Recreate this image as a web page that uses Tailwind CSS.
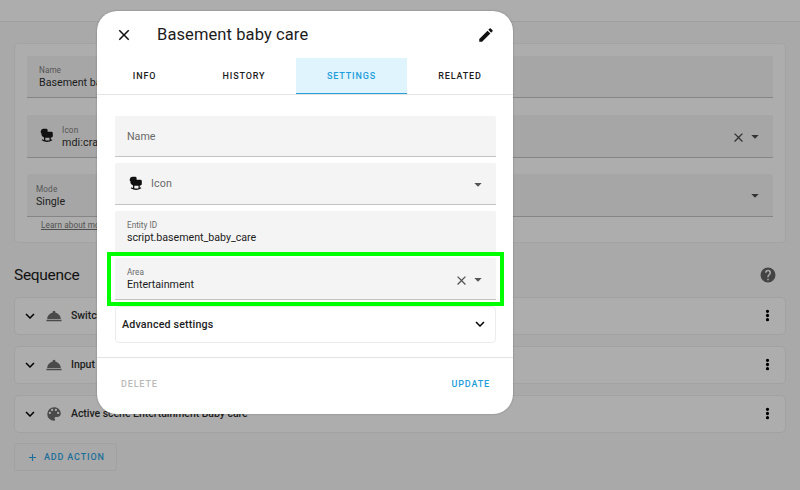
<!DOCTYPE html>
<html lang="en">
<head>
<meta charset="utf-8">
<title>Basement baby care</title>
<script src="https://cdn.jsdelivr.net/npm/@tailwindcss/browser@4"></script>
</head>
<body class="font-['Roboto',sans-serif] bg-[#a9a9a9] text-[#1c1c1c] w-[800px] h-[490px] overflow-hidden relative">
<svg class="hidden">
  <symbol id="close" viewBox="0 0 24 24"><path d="M19,6.41L17.59,5L12,10.59L6.41,5L5,6.41L10.59,12L5,17.59L6.41,19L12,13.41L17.59,19L19,17.59L13.41,12L19,6.41Z"/></symbol>
  <symbol id="chev" viewBox="0 0 24 24"><path d="M7.41,8.58L12,13.17L16.59,8.58L18,10L12,16L6,10L7.41,8.58Z"/></symbol>
  <symbol id="tri" viewBox="0 0 8 4"><path d="M0.3 0H7.7L4 3.8Z"/></symbol>
  <symbol id="bell" viewBox="0 0 24 24"><path d="M12,5A2,2 0 0,1 14,7C14,7.24 13.96,7.47 13.88,7.69C17.95,8.5 21,11.91 21,16H3C3,11.91 6.05,8.5 10.12,7.69C10.04,7.47 10,7.24 10,7A2,2 0 0,1 12,5M22,19H2V17H22V19Z"/></symbol>
  <symbol id="dots" viewBox="0 0 24 24"><path d="M12,15.6A2.3,2.3 0 0,1 12,20.2A2.3,2.3 0 0,1 12,15.6M12,9.7A2.3,2.3 0 0,1 12,14.3A2.3,2.3 0 0,1 12,9.7M12,3.8A2.3,2.3 0 0,1 12,8.4A2.3,2.3 0 0,1 12,3.8Z"/></symbol>
  <symbol id="cradle" viewBox="0 0 14 15"><path d="M3.2 0.8H6.2Q7.6 0.8 7.6 2.2V3.8H11.4Q12.8 3.8 12.8 5.2V8Q12.8 9.4 11.4 9.4H10.8V11.7L11.7 11.2L12.4 12.3Q7 15.6 1.7 12.3L2.4 11.2L4 11.9V9.4Q1.4 8.8 1.4 6.2V5.2Q0.5 4.8 0.7 3.4Q1 0.8 3.2 0.8ZM5.3 9.8V12.3Q7.4 12.7 9.5 12.3V9.8Z" fill-rule="evenodd"/></symbol>
</svg>

<!-- Page behind the scrim -->
<header class="h-[22px] bg-[#adadad] border-b border-[#9f9f9f]"></header>
<main class="pl-[14px] pr-[14px] pt-[21px]">
  <section class="h-[200px] rounded-[5px] border border-[#a3a3a3] bg-[#adadad] px-3 pt-3">
    <div class="h-[42px] rounded-t-[2px] bg-[#a6a6a6] border-b border-[#858585] pl-3 pt-2">
      <div class="text-[8.2px] leading-[12px] text-[#555] tracking-[.05px]">Name</div>
      <div class="text-[10.7px] leading-[13px] tracking-[0px]">Basement baby care</div>
    </div>
    <div class="mt-[17px] h-[43px] rounded-t-[2px] bg-[#a6a6a6] border-b border-[#858585] pl-[13px] pr-[14px] flex items-center">
      <svg class="w-[14px] h-[15px] -mt-[1px] fill-[#111]"><use href="#cradle"/></svg>
      <div class="ml-[8px] flex-1">
        <div class="text-[8.2px] leading-[12px] text-[#555] tracking-[.15px]">Icon</div>
        <div class="text-[10.7px] leading-[13px] tracking-[.1px]">mdi:cradle</div>
      </div>
      <svg class="w-[15px] h-[15px] mr-[5px] mt-[2px] fill-[#333]"><use href="#close"/></svg>
      <svg class="w-[8px] h-[4px] mt-[1px] fill-[#333]"><use href="#tri"/></svg>
    </div>
    <div class="mt-[16px] h-[43px] rounded-t-[2px] bg-[#a6a6a6] border-b border-[#858585] pl-[9px] pr-[14px] flex items-center">
      <div class="flex-1">
        <div class="text-[8.2px] leading-[12px] text-[#555] tracking-[.15px]">Mode</div>
        <div class="text-[10.7px] leading-[13px] tracking-[0px]">Single</div>
      </div>
      <svg class="w-[8px] h-[4px] mt-[1px] fill-[#333]"><use href="#tri"/></svg>
    </div>
    <div class="pl-[14px] pt-[2px] text-[8.2px] leading-[12px] tracking-[.1px] text-[#505050] underline">Learn about modes</div>
  </section>
  <div class="h-[54px] pt-[9px] pr-[9px] flex items-center justify-between">
    <h2 class="text-[15.5px] leading-5 tracking-[-.3px] text-[#111]">Sequence</h2>
    <svg class="w-[18px] h-[18px] fill-[#444]" viewBox="0 0 24 24"><path d="M15.07,11.25L14.17,12.17C13.45,12.89 13,13.5 13,15H11V14.5C11,13.39 11.45,12.39 12.17,11.67L13.41,10.41C13.78,10.05 14,9.55 14,9C14,7.89 13.1,7 12,7A2,2 0 0,0 10,9H8A4,4 0 0,1 12,5A4,4 0 0,1 16,9C16,9.88 15.64,10.67 15.07,11.25M13,19H11V17H13M12,2A10,10 0 1,0 22,12 10,10 0 0,0 12,2Z"/></svg>
  </div>
  <div class="flex flex-col gap-[11px]">
    <div class="h-[38px] rounded-[5px] border border-[#a2a2a2] bg-[#adadad] flex items-center pl-[6px] pr-[9px]">
      <svg class="w-[18px] h-[18px] fill-black"><use href="#chev"/></svg>
      <svg class="w-[18px] h-[18px] ml-[6px] fill-[#4a4a4a]"><use href="#bell"/></svg>
      <div class="ml-[8px] flex-1 text-[10.5px] font-medium tracking-[-.04px]">Switch</div>
      <svg class="w-[17px] h-[17px] -mt-[1px] fill-black"><use href="#dots"/></svg>
    </div>
    <div class="h-[38px] rounded-[5px] border border-[#a2a2a2] bg-[#adadad] flex items-center pl-[6px] pr-[9px]">
      <svg class="w-[18px] h-[18px] fill-black"><use href="#chev"/></svg>
      <svg class="w-[18px] h-[18px] ml-[6px] fill-[#4a4a4a]"><use href="#bell"/></svg>
      <div class="ml-[8px] flex-1 text-[10.5px] font-medium tracking-[-.04px]">Input</div>
      <svg class="w-[17px] h-[17px] -mt-[1px] fill-black"><use href="#dots"/></svg>
    </div>
    <div class="h-[38px] rounded-[5px] border border-[#a2a2a2] bg-[#adadad] flex items-center pl-[6px] pr-[9px]">
      <svg class="w-[18px] h-[18px] fill-black"><use href="#chev"/></svg>
      <svg class="w-[18px] h-[18px] ml-[6px] -mt-[1px] fill-[#4a4a4a]" viewBox="0 0 24 24"><path d="M17.5,12A1.5,1.5 0 0,1 16,10.5A1.5,1.5 0 0,1 17.5,9A1.5,1.5 0 0,1 19,10.5A1.5,1.5 0 0,1 17.5,12M14.5,8A1.5,1.5 0 0,1 13,6.5A1.5,1.5 0 0,1 14.5,5A1.5,1.5 0 0,1 16,6.5A1.5,1.5 0 0,1 14.5,8M9.5,8A1.5,1.5 0 0,1 8,6.5A1.5,1.5 0 0,1 9.5,5A1.5,1.5 0 0,1 11,6.5A1.5,1.5 0 0,1 9.5,8M6.5,12A1.5,1.5 0 0,1 5,10.5A1.5,1.5 0 0,1 6.5,9A1.5,1.5 0 0,1 8,10.5A1.5,1.5 0 0,1 6.5,12M12,3A9,9 0 0,0 3,12A9,9 0 0,0 12,21A1.5,1.5 0 0,0 13.5,19.5C13.5,19.11 13.35,18.76 13.11,18.5C12.88,18.23 12.73,17.88 12.73,17.5A1.5,1.5 0 0,1 14.23,16H16A5,5 0 0,0 21,11C21,6.58 16.97,3 12,3Z"/></svg>
      <div class="ml-[8px] flex-1 text-[10.5px] font-medium tracking-[-.04px]">Active scene Entertainment Baby care</div>
      <svg class="w-[17px] h-[17px] -mt-[1px] fill-black"><use href="#dots"/></svg>
    </div>
  </div>
  <button class="mt-[10px] w-[103px] h-[28px] rounded-[3px] border border-[#a1a1a1] flex items-center pl-[12px] pt-[1px] text-[#1c6f9a] text-[9px] font-medium tracking-[.85px]">
    <svg class="w-[11px] h-[11px] mr-[6px] -mt-[1px]" viewBox="0 0 11 11"><path d="M5.5 2V9M2 5.5H9" stroke="currentColor" stroke-width="1.1"/></svg><span class="pt-[1px]">ADD ACTION</span></button>
</main>

<!-- Dialog -->
<div class="absolute left-[97px] top-[11px] w-[416px] h-[403px] rounded-[20px] bg-white shadow-[0_0_2px_rgba(0,0,0,0.3)] flex flex-col">
  <div class="h-[47px] flex items-center pl-[18px] pr-[18px]">
    <svg class="w-[18px] h-[18px] fill-[#111]"><use href="#close"/></svg>
    <h1 class="ml-[24px] flex-1 pt-[2px] text-[16.5px] tracking-[.1px]">Basement baby care</h1>
    <svg class="w-[18px] h-[18px] fill-[#111]" viewBox="0 0 24 24"><path d="M20.71,7.04C21.1,6.65 21.1,6 20.71,5.63L18.37,3.29C18,2.9 17.35,2.9 16.96,3.29L15.12,5.12L18.87,8.87M3,17.25V21H6.75L17.81,9.93L14.06,6.18L3,17.25Z"/></svg>
  </div>
  <nav class="h-[37px] border-b border-[#e4e4e4] flex text-[9px] font-medium tracking-[.85px] text-center leading-[37px]">
    <div class="w-[95px]">INFO</div>
    <div class="w-[104px]">HISTORY</div>
    <div class="w-[111px] h-[36px] bg-[#e0f4fe] border-b border-[#2a9fd8] text-[#1d9ddb]">SETTINGS</div>
    <div class="w-[106px]">RELATED</div>
  </nav>
  <div class="px-[18px] pt-[21px] flex flex-col h-[262px] w-[417px]">
    <div class="h-[41px] rounded-t-[2px] bg-[#f4f4f4] border-b border-[#c3c3c3] px-3 pt-[2px] flex items-center text-[10.7px] tracking-[0px] text-[#6a6a6a]">Name</div>
    <div class="mt-[6px] h-[42px] rounded-t-[2px] bg-[#f4f4f4] border-b border-[#c3c3c3] pl-[14px] pr-[14px] flex items-center text-[10.7px] tracking-[.1px] text-[#6a6a6a]">
      <svg class="w-[14px] h-[15px] mr-[8px] -mt-[1px] fill-[#111]"><use href="#cradle"/></svg>
      <div class="flex-1 pt-[2px]">Icon</div>
      <svg class="w-[8px] h-[4px] mt-[2px] fill-[#555]"><use href="#tri"/></svg>
    </div>
    <div class="mt-[6px] h-[42px] rounded-t-[2px] bg-[#f4f4f4] border-b border-[#c3c3c3] px-3 pt-2">
      <div class="text-[8.2px] leading-[12px] text-[#6a6a6a] tracking-[0px]">Entity ID</div>
      <div class="text-[10.7px] leading-[13px] tracking-[-.04px]">script.basement_baby_care</div>
    </div>
    <div class="mt-[5px] h-[42px] rounded-t-[2px] bg-[#f4f4f4] border-b border-[#c3c3c3] pl-3 pr-[14px] flex items-center">
      <div class="flex-1">
        <div class="text-[8.2px] leading-[12px] text-[#6a6a6a] tracking-[0px]">Area</div>
        <div class="text-[10.7px] leading-[13px] tracking-[-.03px]">Entertainment</div>
      </div>
      <svg class="w-[15px] h-[15px] mr-[5px] mt-[3px] fill-[#555]"><use href="#close"/></svg>
      <svg class="w-[8px] h-[4px] mt-[2px] fill-[#555]"><use href="#tri"/></svg>
    </div>
    <div class="mt-[6px] h-[37px] rounded-[4px] border border-[#ececec] flex items-center justify-between pl-[6px] pr-[6px] text-[10.7px] font-medium tracking-[.17px]"><span class="pt-[1px]">Advanced settings</span>
      <svg class="w-[18px] h-[18px] -mt-[2px] fill-black"><use href="#chev"/></svg>
    </div>
  </div>
  <footer class="flex-1 border-t border-[#e4e4e4] pl-[24px] pr-[23px] pb-[2px] flex items-center justify-between text-[9px] font-medium tracking-[.85px]">
    <span class="text-[#b9b9b9]">DELETE</span><span class="text-[#1d9ddb]">UPDATE</span>
  </footer>
  <div class="absolute left-[10px] top-[241px] w-[397px] h-[54px] border-4 border-[#00ff00]"></div>
</div>
</body>
</html>
